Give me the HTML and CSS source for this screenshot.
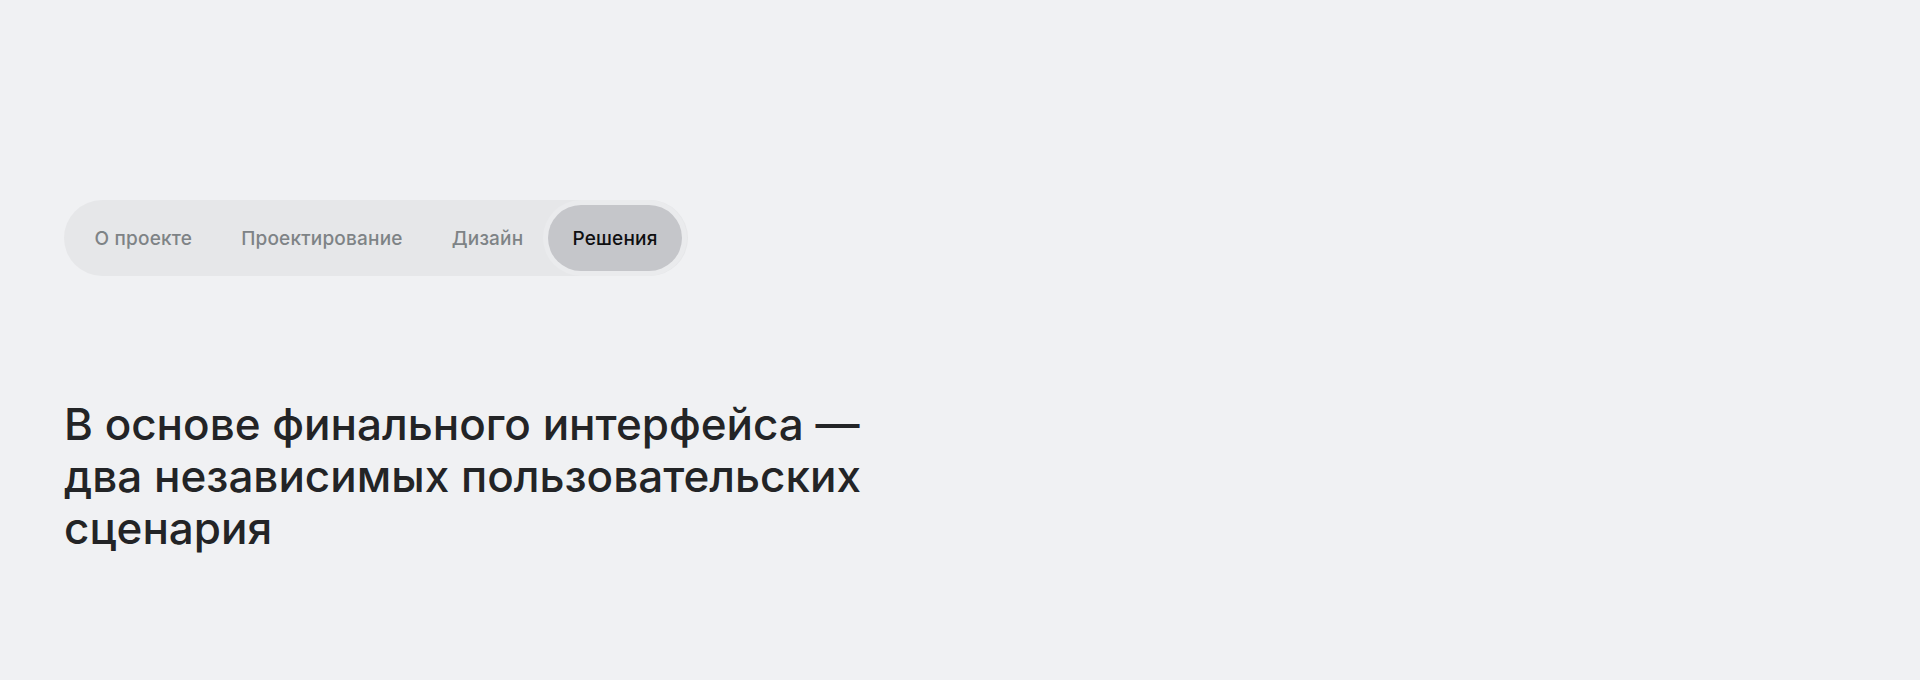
FILE: index.html
```html
<!DOCTYPE html>
<html lang="ru">
<head>
  <meta charset="UTF-8" />
  <meta name="viewport" content="width=device-width, initial-scale=1.0" />
  <title>Решения</title>
  <link rel="stylesheet" href="styles.css">
</head>
<body>
<div class="page">
  <nav class="tabs">
    <a class="tab" href="#about">О проекте</a>
    <a class="tab" href="#design-process">Проектирование</a>
    <a class="tab" href="#design">Дизайн</a>
    <a class="tab active" href="#solutions">Решения</a>
  </nav>

  <h2 class="lead">
    В основе финального интерфейса —<br>
    два независимых пользовательских<br>
    сценария
  </h2>
</div>
</body>
</html>
```

FILE: styles.css
```css
body,
html {
  margin: 0;
  padding: 0;
  background-color: #f0f1f3;
  font-family: Inter, "Noto Sans", Arial, sans-serif;
}

.page {
  padding: 200px 64px 0;
}

/* section switcher */
.tabs {
  display: inline-flex;
  align-items: center;
  padding: 5px 6px;
  background-color: #e6e7e9;
  border-radius: 40px;
}

.tab {
  display: block;
  padding: 1px 24.5px 0;
  height: 65px;
  line-height: 65px;
  font-size: 19px;
  font-weight: 500;
  letter-spacing: 0.2px;
  color: #7e8386;
  text-decoration: none;
  border-radius: 33px;
}

.tab.active {
  background-color: #c5c6ca;
  color: #0f0f10;
  box-shadow: 0 0 0 5px #eaebed;
}

.lead {
  margin: 122px 0 0;
  font-size: 44px;
  line-height: 52px;
  font-weight: 500;
  color: #232426;
}
```
